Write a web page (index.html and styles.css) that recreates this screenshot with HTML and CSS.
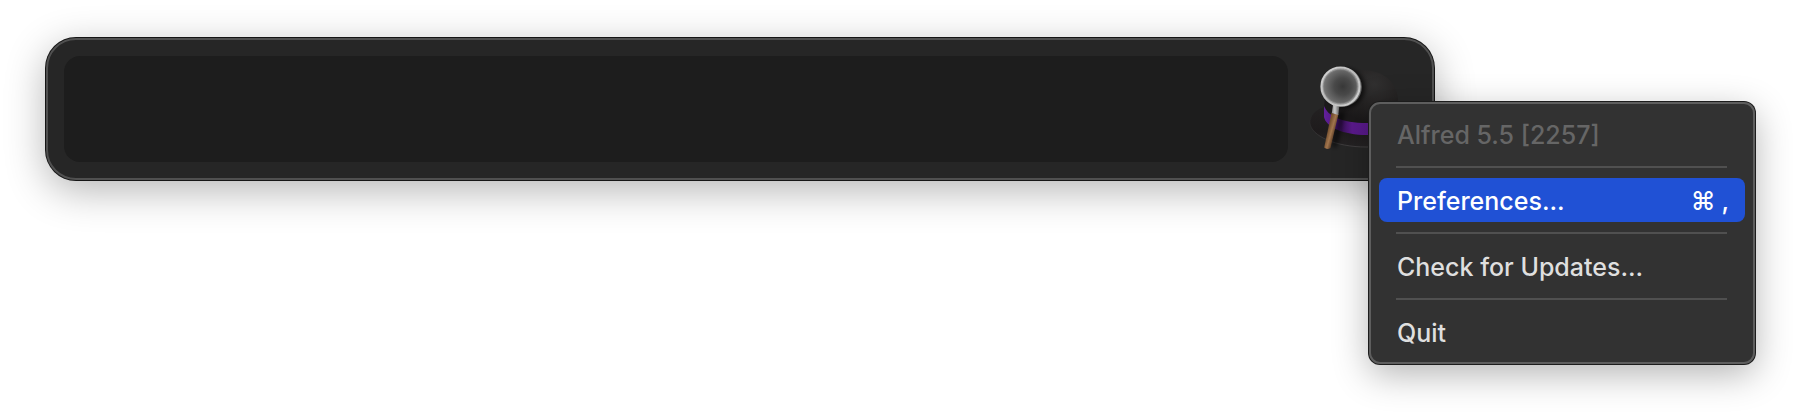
FILE: index.html
```html
<!DOCTYPE html>
<html lang="en">
<head>
<meta charset="utf-8">
<title>Alfred</title>
<link rel="stylesheet" href="styles.css">
</head>
<body>
<main class="stage">
  <div class="launcher">
    <input class="query" type="text" aria-label="Search">
    <svg class="hat" viewBox="0 0 108 106" aria-hidden="true">
      <defs>
        <radialGradient id="dome" cx="0.68" cy="0.22" r="0.6">
          <stop offset="0" stop-color="#313030"/>
          <stop offset="0.6" stop-color="#242222"/>
          <stop offset="1" stop-color="#1b191a"/>
        </radialGradient>
        <linearGradient id="brim" x1="0" y1="0" x2="0" y2="1">
          <stop offset="0" stop-color="#232122"/>
          <stop offset="0.6" stop-color="#1e1b1c"/>
          <stop offset="1" stop-color="#252324"/>
        </linearGradient>
        <linearGradient id="edge" x1="0" y1="0" x2="0" y2="1">
          <stop offset="0.2" stop-color="#383637" stop-opacity="0"/>
          <stop offset="1" stop-color="#403e3f"/>
        </linearGradient>
        <linearGradient id="band" x1="0" y1="0" x2="1" y2="0">
          <stop offset="0" stop-color="#62209a"/>
          <stop offset="0.12" stop-color="#541888"/>
          <stop offset="0.24" stop-color="#3a115a"/>
          <stop offset="0.38" stop-color="#5b1a8c"/>
          <stop offset="1" stop-color="#55198a"/>
        </linearGradient>
        <radialGradient id="glass" cx="0.56" cy="0.5" r="0.56">
          <stop offset="0" stop-color="#383838"/>
          <stop offset="0.4" stop-color="#494949"/>
          <stop offset="1" stop-color="#7d7d7d"/>
        </radialGradient>
        <linearGradient id="rim" x1="0" y1="0" x2="1" y2="1">
          <stop offset="0" stop-color="#d6d6d6"/>
          <stop offset="0.5" stop-color="#b9b9b9"/>
          <stop offset="1" stop-color="#d8d8d8"/>
        </linearGradient>
        <linearGradient id="wood" gradientUnits="userSpaceOnUse" x1="20" y1="74" x2="27" y2="76">
          <stop offset="0" stop-color="#76502f"/>
          <stop offset="0.5" stop-color="#a2764e"/>
          <stop offset="1" stop-color="#5f3f27"/>
        </linearGradient>
        <linearGradient id="collar" x1="0" y1="0" x2="1" y2="0">
          <stop offset="0" stop-color="#8e8e8e"/>
          <stop offset="0.4" stop-color="#c9c9c9"/>
          <stop offset="1" stop-color="#5c5c5c"/>
        </linearGradient>
        <filter id="soft" x="-100%" y="-50%" width="300%" height="200%">
          <feGaussianBlur stdDeviation="2.2"/>
        </filter>
      </defs>
      <path fill="url(#brim)" stroke="url(#edge)" d="M16 51C7 54 2 60 2 67C3 80 28 91 58 91C86 91 106 82 106 69C106 61 99 55 90 52Z"/>
      <path fill="url(#dome)" d="M16 54C16 30 28 14 53 14C76 14 88 26 90 42L90 68C75 80 32 82 16 60Z"/>
      <path fill="url(#band)" d="M16 50C20 60 33 67 59 67C74 67 84 64 90 58L90 68C84 76 73 79 59 79C35 79 18 71 16 61Z"/>
      <path fill="none" stroke="#000" stroke-opacity="0.5" stroke-width="6" filter="url(#soft)" d="M34 56L26 91"/>
      <circle cx="37" cy="32" r="20" fill="#000" fill-opacity="0.6" filter="url(#soft)"/>
      <path fill="url(#wood)" d="M23.500 57L30.500 58L22.500 92Q19 94 16.200 91.500Z"/>
      <path fill="url(#collar)" d="M25 49H31.500L30.300 59L23.800 57Z"/>
      <circle cx="34" cy="31" r="19.800" fill="#686868"/>
      <circle cx="32.500" cy="30.500" r="19" fill="url(#glass)" stroke="url(#rim)" stroke-width="2.200"/>
      <circle cx="32.500" cy="30.500" r="16.800" fill="none" stroke="#777" stroke-width="1.200"/>
      <circle cx="32.500" cy="30.500" r="17.600" fill="none" stroke="#ccc" stroke-opacity="0.6" stroke-width="0.800"/>
    </svg>
  </div>
  <div class="menu" role="menu">
    <button class="item" role="menuitem" disabled>Alfred 5.5 [2257]</button>
    <hr class="rule">
    <button class="item selected" role="menuitem">Preferences...<span class="keys"><kbd>⌘</kbd><kbd>,</kbd></span></button>
    <hr class="rule">
    <button class="item" role="menuitem">Check for Updates...</button>
    <hr class="rule">
    <button class="item" role="menuitem">Quit</button>
  </div>
</main>
</body>
</html>
```
FILE: styles.css
```css
* {
  box-sizing: border-box;
}

body {
  margin: 0;
  background: #fff;
  font-family: Inter, "Liberation Sans", sans-serif;
}

.stage {
  display: flex;
  flex-direction: column;
  padding: 38px 45px 54px 46px;
}

.launcher {
  display: flex;
  align-items: center;
  gap: 20px;
  margin-right: 321px;
  padding: 16px;
  border: 2px solid #505050;
  border-radius: 30px;
  background: #262626;
  box-shadow: 0 0 0 1px #151515, 0 10px 40px rgba(0, 0, 0, 0.3);
}

.query {
  flex: 1;
  min-width: 0;
  height: 106px;
  padding: 0 24px;
  border: 0;
  border-radius: 16px;
  outline: 0;
  background: #1d1d1d;
  color: #eee;
  font: 48px Inter, "Liberation Sans", sans-serif;
}

.hat {
  flex: none;
  width: 108px;
  height: 106px;
}

/* The menu opens over the lower right corner of the launcher. */
.menu {
  align-self: flex-end;
  width: 386px;
  margin-top: -78px;
  padding: 8px;
  border: 2px solid #5e5e5e;
  border-radius: 11px;
  background: #323232;
  box-shadow: 0 0 0 1px #1c1c1c, 0 10px 36px rgba(0, 0, 0, 0.3);
}

.item {
  display: flex;
  align-items: center;
  justify-content: space-between;
  width: 100%;
  height: 44px;
  padding: 2px 16px 0 18px;
  border: 0;
  border-radius: 8px;
  background: none;
  color: #dfdfdf;
  font: 500 25px Inter, "Liberation Sans", sans-serif;
  text-align: left;
}

.item:disabled {
  color: #666;
}

.selected {
  background: #2051d5;
  color: #fff;
}

.keys {
  display: flex;
  gap: 6px;
}

.keys kbd {
  font: inherit;
}

.rule {
  height: 2px;
  margin: 10px 18px 10px 17px;
  border: 0;
  background: #505050;
}
```
